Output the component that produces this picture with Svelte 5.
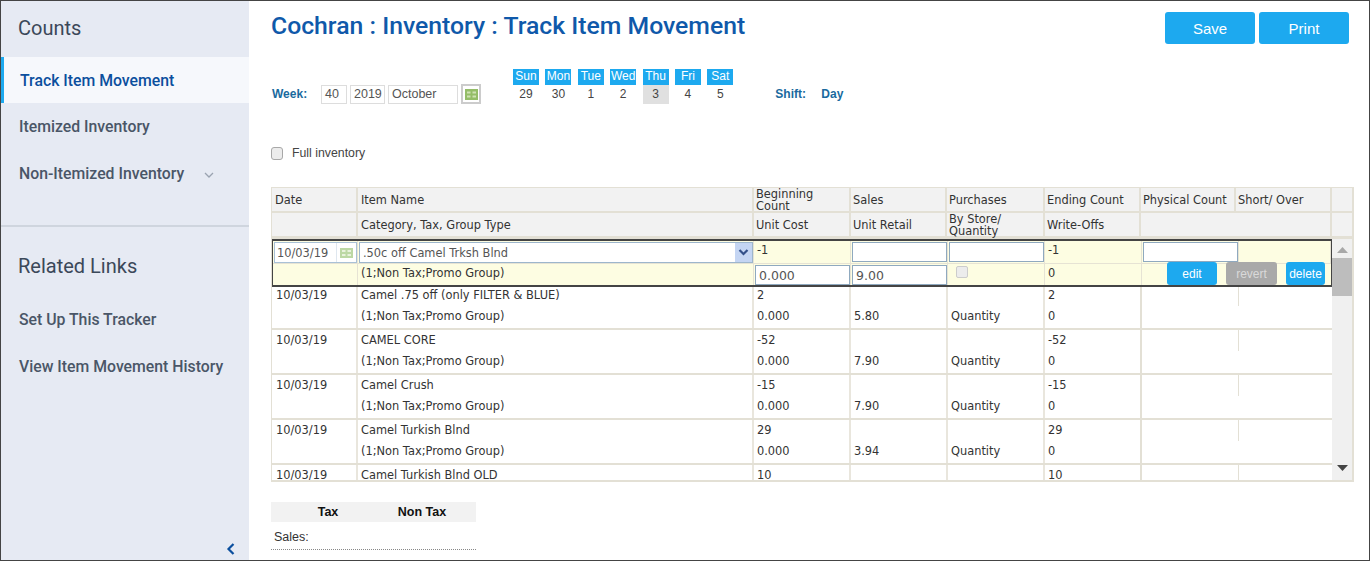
<script>
  const days = [['Sun',29],['Mon',30],['Tue',1],['Wed',2],['Thu',3],['Fri',4],['Sat',5]];
  const rows = [
    {name:'Camel .75 off (only FILTER & BLUE)',begin:'2',retail:'5.80',end:'2'},
    {name:'CAMEL CORE',begin:'-52',retail:'7.90',end:'-52'},
    {name:'Camel Crush',begin:'-15',retail:'7.90',end:'-15'},
    {name:'Camel Turkish Blnd',begin:'29',retail:'3.94',end:'29'},
    {name:'Camel Turkish Blnd OLD',begin:'10',retail:'3.94',end:'10'}
  ];
</script>

<div class="frame">
  <aside class="side">
    <h2 class="counts">Counts</h2>
    <a class="nav active">Track Item Movement</a>
    <a class="nav">Itemized Inventory</a>
    <a class="nav">Non-Itemized Inventory
      <svg class="chev" width="10" height="6" viewBox="0 0 10 6"><path d="M1 1l4 4 4-4" fill="none" stroke="#9aa3b0" stroke-width="1.3"/></svg>
    </a>
    <div class="rule"></div>
    <h2 class="related">Related Links</h2>
    <a class="nav">Set Up This Tracker</a>
    <a class="nav">View Item Movement History</a>
    <div class="collapse">
      <svg width="10" height="14" viewBox="0 0 10 14"><path d="M7.5 2L2.5 7l5 5" fill="none" stroke="#0b4f9e" stroke-width="2.2"/></svg>
    </div>
  </aside>

  <main class="main">
    <header class="top">
      <h1>Cochran : Inventory : Track Item Movement</h1>
      <div class="btns"><button>Save</button><button>Print</button></div>
    </header>

    <div class="week">
      <b class="lbl wk">Week:</b>
      <span class="fld f1">40</span>
      <span class="fld f2">2019</span>
      <span class="fld f3">October</span>
      <span class="calbtn">
        <svg width="13" height="11" viewBox="0 0 13 11"><rect width="13" height="11" fill="#94bd68"/><path d="M2 2.500h3.500v2H2zM7.500 2.500H11v2H7.500zM2 6.500h3.500v2H2zM7.500 6.500H11v2H7.500z" fill="#cfe2b4"/></svg>
      </span>
      <div class="days">
        {#each days as d}
          <div class="day"><span class="dn">{d[0]}</span><span class="dd" class:cur={d[1]===3}>{d[1]}</span></div>
        {/each}
      </div>
      <b class="lbl shift">Shift:</b>
      <b class="lbl dayv">Day</b>
    </div>

    <label class="full"><input type="checkbox" />Full inventory</label>

    <section class="grid">
      <div class="hrow">
        <div class="c p3"><span>Date</span></div>
        <div class="c p3"><span>Item Name</span></div>
        <div class="c tight"><span>Beginning<br/>Count</span></div>
        <div class="c"><span>Sales</span></div>
        <div class="c"><span>Purchases</span></div>
        <div class="c"><span>Ending Count</span></div>
        <div class="c"><span>Physical Count</span></div>
        <div class="c"><span>Short/ Over</span></div>
        <div class="c end"></div>
      </div>
      <div class="hrow second">
        <div class="c"></div>
        <div class="c p3"><span>Category, Tax, Group Type</span></div>
        <div class="c"><span>Unit Cost</span></div>
        <div class="c"><span>Unit Retail</span></div>
        <div class="c tight"><span>By Store/<br/>Quantity</span></div>
        <div class="c"><span>Write-Offs</span></div>
        <div class="c wide"></div>
        <div class="c end"></div>
      </div>
      <div class="bodywrap">
        <div class="rows">
          <div class="sel">
            <div class="line l1">
              <div class="cell pad0">
                <div class="datebox"><span>10/03/19</span><i><svg width="13" height="10" viewBox="0 0 13 10"><rect width="13" height="10" fill="#bcd8a4"/><path d="M2 2h3.500v2H2zM7.500 2H11v2H7.500zM2 6h3.500v2H2zM7.500 6H11v2H7.500z" fill="#e8f2dc"/></svg></i></div>
              </div>
              <div class="cell pad0">
                <div class="combo"><span>.50c off Camel Trksh Blnd</span><i><svg width="11" height="7" viewBox="0 0 11 7"><path d="M1.500 1l4 4 4-4" fill="none" stroke="#33508a" stroke-width="2.200"/></svg></i></div>
              </div>
              <div class="cell"><span>-1</span></div>
              <div class="cell pad0"><div class="box"></div></div>
              <div class="cell pad0"><div class="box"></div></div>
              <div class="cell"><span>-1</span></div>
              <div class="cell pad0"><div class="box"></div></div>
              <div class="cell"></div>
            </div>
            <div class="line l2">
              <div class="cell"></div>
              <div class="cell"><span>(1;Non Tax;Promo Group)</span></div>
              <div class="cell pad0"><div class="box val">0.000</div></div>
              <div class="cell pad0"><div class="box val">9.00</div></div>
              <div class="cell"><span class="mini"></span></div>
              <div class="cell"><span>0</span></div>
              <div class="acts">
                <button class="edit">edit</button>
                <button class="rev">revert</button>
                <button class="del">delete</button>
              </div>
            </div>
          </div>
          {#each rows as r}
            <div class="item">
              <div class="line">
                <div class="cell"><span>10/03/19</span></div>
                <div class="cell"><span>{r.name}</span></div>
                <div class="cell"><span>{r.begin}</span></div>
                <div class="cell"></div>
                <div class="cell"></div>
                <div class="cell"><span>{r.end}</span></div>
                <div class="cell"></div>
                <div class="cell"></div>
              </div>
              <div class="line second">
                <div class="cell"></div>
                <div class="cell"><span>(1;Non Tax;Promo Group)</span></div>
                <div class="cell"><span>0.000</span></div>
                <div class="cell"><span>{r.retail}</span></div>
                <div class="cell"><span>Quantity</span></div>
                <div class="cell"><span>0</span></div>
                <div class="cell"></div>
                <div class="cell"></div>
              </div>
            </div>
          {/each}
        </div>
        <div class="scroll">
          <svg class="up" width="11" height="6" viewBox="0 0 11 6"><path d="M5.500 0L11 6H0z" fill="#a8a8a8"/></svg>
          <div class="thumb"></div>
          <svg class="down" width="11" height="6" viewBox="0 0 11 6"><path d="M0 0h11L5.500 6z" fill="#444"/></svg>
        </div>
      </div>
    </section>

    <section class="totals">
      <div class="thead"><b>Tax</b><b>Non Tax</b></div>
      <div class="sales">Sales:</div>
    </section>
  </main>
</div>

<style>
  :global(body) { margin: 0; background: #fff; }
  .frame {
    box-sizing: border-box; width: 1370px; height: 561px; overflow: hidden;
    border: 1px solid #444; display: flex; background: #fff;
  }
  .side {
    width: 248px; flex: none; background: #e6eaf3; display: flex; flex-direction: column;
    font-family: Roboto, sans-serif; position: relative;
  }
  .counts, .related { margin: 0; font-weight: 400; font-size: 20px; line-height: 24px; color: #3b4859; }
  .counts { padding: 15px 0 17px 17px; }
  .related { padding: 27px 0 18px 17px; }
  .nav {
    display: flex; align-items: center; height: 47px; padding-left: 18px;
    font-size: 15.800px; font-weight: 500; color: #4a5667; position: relative; white-space: pre;
  }
  .nav.active {
    height: 46px; color: #0b4f9e; background: #f6f8fc;
    border-left: 3px solid #1da9ef; padding-left: 16px;
  }
  .chev { margin-left: 16px; margin-top: 2px; }
  .rule { height: 2px; background: #cfd5de; margin-top: 28px; }
  .collapse { position: absolute; left: 225px; top: 541px; line-height: 0; }

  .main { flex: 1; padding: 0 0 0 22px; min-width: 0; font-family: "Liberation Sans", Arial, sans-serif; }
  .top { display: flex; justify-content: space-between; height: 67px; }
  h1 { margin: 10px 0 0; font: 500 24.750px/30px Roboto, sans-serif; color: #0f59aa; }
  .btns { display: flex; gap: 4px; margin: 11px 20px 0 0; }
  .btns button {
    width: 90px; height: 32px; border: 0; border-radius: 3px; background: #1da9ef; color: #fff;
    font: 400 15px "Liberation Sans", Arial, sans-serif; padding: 0;
  }
  .week { display: flex; align-items: flex-end; height: 36px; font-size: 12px; color: #333; }
  .lbl { color: #1a6a9e; font-size: 12px; line-height: 19px; font-weight: 700; }
  .wk { width: 50px; padding-left: 1px; box-sizing: border-box; }
  .fld {
    box-sizing: border-box; height: 19px; border: 1px solid #ddd; line-height: 17px; padding-left: 3px;
    margin-right: 3px; color: #555; font-size: 12.500px;
  }
  .f1 { width: 26px; } .f2 { width: 35px; } .f3 { width: 70px; }
  .calbtn {
    box-sizing: border-box; width: 20px; height: 20px; border: 2px solid #ccc; display: flex;
    align-items: center; justify-content: center; margin-bottom: 0;
  }
  .days { display: flex; margin-left: 32px; gap: 6.400px; }
  .day { width: 26px; display: flex; flex-direction: column; align-items: center; }
  .dn {
    width: 100%; height: 16px; background: #1da9ef; color: #fff; text-align: center; font-size: 12px; line-height: 15px;
  }
  .dd { width: 100%; height: 19px; line-height: 19px; text-align: center; color: #444; font-size: 12px; }
  .dd.cur { background: #e0e0e0; }
  .shift { margin-left: 42px; width: 46px; }

  .full {
    display: flex; align-items: center; height: 14px; margin-top: 42px; font-size: 12.300px; color: #444;
  }
  .full input {
    appearance: none; box-sizing: border-box; margin: 0 9px 0 0; width: 12px; height: 13px;
    background: #ececec; border: 1px solid #a8a8a8; border-radius: 3px;
  }

  .grid {
    box-sizing: border-box; width: 1083px; height: 295px; margin-top: 27px; overflow: hidden;
    border: 1px solid #e3e0d5; border-width: 1px 2px 2px 1px;
    font: 11.400px/14px "DejaVu Sans", Verdana, sans-serif; color: #333;
  }
  .hrow {
    display: grid; grid-template-columns: 86px 396px 97px 96px 98px 96px 95px 96px 21px;
    background: #f2f2f2; border-bottom: 2px solid #e3e0d5; height: 23px;
  }
  .hrow.second { border-bottom-width: 3px; }
  .hrow .c { border-right: 2px solid #e3e0d5; display: flex; align-items: center; padding-left: 2px; white-space: nowrap; min-width: 0; }
  .hrow .c.p3 { padding-left: 3px; }
  .hrow .c.wide { grid-column: span 2; }
  .hrow .c.end { border-right: 0; }
  .hrow .c.tight { line-height: 12px; }
  .bodywrap { display: flex; height: 242px; }
  .rows { width: 1060px; flex: none; overflow: hidden; }
  .line {
    display: grid; grid-template-columns: 86px 396px 97px 97px 97px 97px 97px 1fr; height: 21px;
  }
  .line.second { height: 22px; }
  .item { border-bottom: 2px solid #e3e0d5; height: 43px; }
  .sel + .item { margin-top: -2px; }
  .cell {
    box-sizing: border-box; border-right: 2px solid #e9e6dd; padding: 3px 2px 0 3px; white-space: nowrap; overflow: hidden; min-width: 0;
  }
  .item .cell:first-child { padding-left: 4px; }
  .item .cell:nth-child(7) { border-right-color: transparent; }
  .item .line:first-child .cell:nth-child(7) { border-right-color: #e3e0d5; border-right-width: 1px; }
  .item .cell:nth-child(8) { border-right: 0; }
  .item .cell:nth-child(6) { border-right-color: #e3e0d5; }

  .sel {
    box-sizing: border-box; height: 48px; border: 2px solid #444; border-width: 2px 1px 2px 1px;
    background: #fdfde2; position: relative; z-index: 1;
  }
  .sel .line { grid-template-columns: 85px 396px 97px 97px 97px 97px 97px 1fr; height: 22px; }
  .sel .l1 { border-bottom: 1px solid #e6e3d4; box-sizing: content-box; }
  .sel .l2 { height: 21px; }
  .sel .cell { border-right: 1px solid #e6e3d4; padding-top: 2px; }
  .sel .cell.pad0 { padding: 0 0 0 1px; }
  .datebox {
    box-sizing: border-box; height: 21px; margin: 1px 0 0 0; border: 1px solid #a9c1d6; background: #fff;
    display: flex; align-items: center; color: #555; padding-left: 2px; justify-content: space-between;
  }
  .datebox i { height: 100%; width: 19px; border-left: 1px solid #dfe7ef; display: flex; align-items: center; justify-content: center; }
  .combo {
    box-sizing: border-box; height: 21px; margin: 1px 0 0; border: 1px solid #9db6cc; background: #fff;
    display: flex; align-items: center; color: #555; padding-left: 3px; justify-content: space-between;
  }
  .combo i { width: 17px; height: 100%; background: #c4d5f3; display: flex; align-items: center; justify-content: center; }
  .box {
    box-sizing: border-box; height: 20px; margin-top: 1px; border: 1px solid #8fa9bf; background: #fff; color: #555;
    padding: 2px 0 0 3px; font-size: 12.500px; line-height: 15px;
  }
  .box.val { margin-top: 1px; height: 20px; }
  .mini {
    display: block; box-sizing: border-box; width: 12px; height: 12px; margin: 0 0 0 5px;
    background: #ececec; border: 1px solid #ccc; border-radius: 2px;
  }
  .acts { grid-column: span 2; display: flex; align-items: flex-start; padding-left: 25px; gap: 9px; }
  .acts button {
    border: 0; border-radius: 3px; height: 23px; padding: 0; margin-top: -2px; color: #fff;
    font: 12px "Liberation Sans", Arial, sans-serif; background: #1da9ef;
  }
  .edit { width: 50px; } .rev { width: 51px; background: #a9a9a9 !important; color: #d9d9d9 !important; } .del { width: 39px; }

  .scroll { flex: 1; background: #f0f0f0; position: relative; display: flex; flex-direction: column; align-items: center; }
  .up { margin-top: 8px; }
  .thumb { width: 100%; height: 38px; background: #bdbdbd; margin-top: 5px; }
  .down { position: absolute; bottom: 10px; }

  .totals { width: 205px; margin-top: 20px; font-size: 12px; color: #333; }
  .thead {
    display: grid; grid-template-columns: 114px 74px; height: 20px; line-height: 20px; background: #f2f2f2; color: #111; text-align: center; font-size: 12.500px;
  }
  .sales { height: 27px; line-height: 30px; padding-left: 3px; border-bottom: 1px dotted #888; font-size: 12.500px; }
</style>
